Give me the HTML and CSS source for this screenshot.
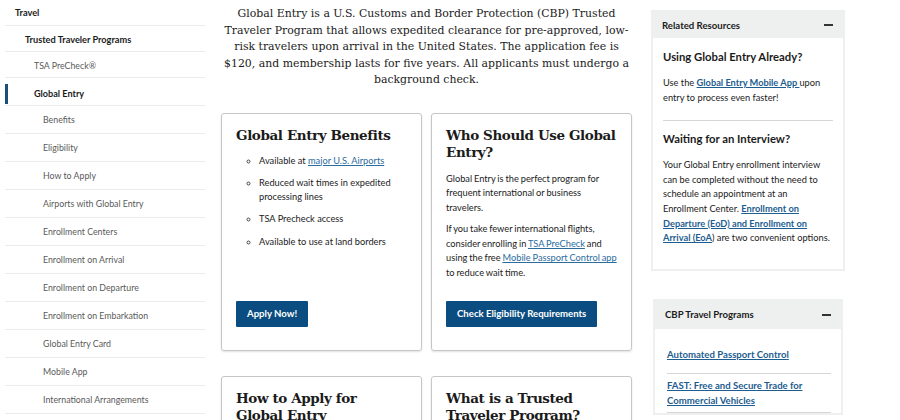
FILE: index.html
```html
<!DOCTYPE html>
<html lang="en">
<head>
<meta charset="utf-8">
<title>Global Entry</title>
<link rel="stylesheet" href="styles.css">
</head>
<body>
<div class="page">
  <nav class="sidenav">
    <ul>
      <li class="lvl0">Travel</li>
      <li class="lvl1">Trusted Traveler Programs</li>
      <li class="lvl2 short">TSA PreCheck®</li>
      <li class="lvl2 active">Global Entry</li>
      <li class="lvl3">Benefits</li>
      <li class="lvl3">Eligibility</li>
      <li class="lvl3">How to Apply</li>
      <li class="lvl3">Airports with Global Entry</li>
      <li class="lvl3">Enrollment Centers</li>
      <li class="lvl3">Enrollment on Arrival</li>
      <li class="lvl3">Enrollment on Departure</li>
      <li class="lvl3">Enrollment on Embarkation</li>
      <li class="lvl3">Global Entry Card</li>
      <li class="lvl3">Mobile App</li>
      <li class="lvl3">International Arrangements</li>
    </ul>
  </nav>

  <main class="main">
    <p class="intro">Global Entry is a U.S. Customs and Border Protection (CBP) Trusted Traveler Program that allows expedited clearance for pre-approved, low-risk travelers upon arrival in the United States. The application fee is $120, and membership lasts for five years. All applicants must undergo a background check.</p>

    <div class="cards">
      <section class="card">
        <h2>Global Entry Benefits</h2>
        <ul class="bullets">
          <li>Available at <a href="#">major U.S. Airports</a></li>
          <li>Reduced wait times in expedited processing lines</li>
          <li>TSA Precheck access</li>
          <li>Available to use at land borders</li>
        </ul>
        <a class="btn" href="#">Apply Now!</a>
      </section>
      <section class="card">
        <h2>Who Should Use Global Entry?</h2>
        <p>Global Entry is the perfect program for frequent international or business travelers.</p>
        <p>If you take fewer international flights, consider enrolling in <a href="#">TSA PreCheck</a> and using the free <a href="#">Mobile Passport Control app</a> to reduce wait time.</p>
        <a class="btn" href="#">Check Eligibility Requirements</a>
      </section>
      <section class="card">
        <h2>How to Apply for Global Entry</h2>
      </section>
      <section class="card">
        <h2>What is a Trusted Traveler Program?</h2>
      </section>
    </div>
  </main>

  <aside class="rail">
    <div class="panel">
      <div class="panel-head"><span>Related Resources</span><span class="minus"></span></div>
      <div class="panel-body">
        <h3>Using Global Entry Already?</h3>
        <p>Use the <a class="strong" href="#">Global Entry Mobile App </a>upon entry to process even faster!</p>
        <hr>
        <h3>Waiting for an Interview?</h3>
        <p>Your Global Entry enrollment interview can be completed without the need to schedule an appointment at an Enrollment Center. <a class="strong" href="#">Enrollment on Departure (EoD) and Enrollment on Arrival (EoA</a>) are two convenient options.</p>
      </div>
    </div>
    <div class="panel panel-narrow">
      <div class="panel-head tall"><span>CBP Travel Programs</span><span class="minus"></span></div>
      <ul class="links">
        <li><a class="strong" href="#">Automated Passport Control</a></li>
        <li><a class="strong" href="#">FAST: Free and Secure Trade for Commercial Vehicles</a></li>
      </ul>
    </div>
  </aside>
</div>
</body>
</html>
```

FILE: styles.css
```css
* { box-sizing: border-box; }
html, body { margin: 0; padding: 0; background: #fff; }
body {
  font-family: "Source Sans Pro", Lato, "Noto Sans", sans-serif;
  color: #1b1b1b;
  overflow: hidden;
  height: 420px;
}
.page {
  display: flex;
  align-items: flex-start;
}

/* left nav */
.sidenav { width: 205px; flex: none; }
.sidenav ul { list-style: none; margin: 0; padding: 0; }
.sidenav li {
  position: relative;
  margin-left: 5px;
  height: 28px;
  line-height: 27px;
  border-bottom: 1px solid #ebebeb;
  font-size: 8.8px;
  color: #5a5a5a;
  white-space: nowrap;
}
.sidenav li.lvl0 { height: 26px; line-height: 25px; padding-left: 10px; font-weight: 700; font-size: 9.2px; color: #1b1b1b; }
.sidenav li.lvl1 { height: 26px; line-height: 27px; padding-left: 20px; font-weight: 700; font-size: 9.2px; color: #1b1b1b; }
.sidenav li.short { height: 26px; line-height: 27px; }
.sidenav li.lvl2 { padding-left: 29px; }
.sidenav li.lvl3 { padding-left: 38px; }
.sidenav li.active { font-weight: 700; font-size: 9.1px; color: #1b1b1b; line-height: 31px; }
.sidenav li.active::before {
  content: "";
  position: absolute;
  left: 0;
  top: 6px;
  width: 3px;
  height: 20px;
  background: #1a4f7a;
}

/* main */
.main { width: 411px; margin-left: 16px; flex: none; }
.intro {
  margin: 6px 0 24px;
  font-family: "DejaVu Serif", "Liberation Serif", serif;
  font-size: 10.9px;
  line-height: 16.5px;
  text-align: center;
  color: #1b1b1b;
}
.cards {
  display: grid;
  grid-template-columns: 1fr 1fr;
  column-gap: 9px;
  row-gap: 25px;
}
.card {
  display: flex;
  flex-direction: column;
  height: 238px;
  padding: 13px 14px 23px;
  border: 1px solid #c6c6c6;
  border-radius: 3px;
  box-shadow: 0 1px 2px rgba(0,0,0,0.12);
}
.card h2 {
  margin: 0;
  font-family: "DejaVu Serif", "Liberation Serif", serif;
  font-weight: 700;
  font-size: 13.5px;
  letter-spacing: -0.4px;
  line-height: 17px;
  color: #1b1b1b;
}
.card p {
  margin: 11px 0 0;
  font-size: 9.25px;
  line-height: 14.8px;
  word-spacing: -0.5px;
  color: #1b1b1b;
}
.card p + p { margin-top: 6px; }
.card a { color: #2b6c9e; }
.bullets {
  margin: 10px 0 0;
  padding-left: 23px;
  list-style: circle;
  font-size: 9.25px;
  line-height: 14.3px;
}
.bullets li { margin-bottom: 8px; }
.bullets li::marker { font-size: 8px; color: #444; }
.btn {
  margin-top: auto;
  align-self: flex-start;
  display: inline-block;
  height: 26px;
  line-height: 26px;
  padding: 0 11px;
  background: #0b4d80;
  color: #fff !important;
  text-decoration: none;
  font-size: 9.6px;
  font-weight: 700;
  border-radius: 1px;
}

/* right rail */
.rail { width: 194px; margin-left: 19px; margin-top: 10px; flex: none; }
.panel {
  border: 2px solid #eef0f0;
  margin-bottom: 28px;
}
.panel-narrow { margin: 0 2px; }
.panel-head {
  display: flex;
  justify-content: space-between;
  align-items: center;
  height: 26px;
  padding: 0 10px 0 9px;
  background: #eef0f0;
  font-size: 9.6px;
  font-weight: 700;
  color: #1b1b1b;
}
.panel-head.tall { height: 28px; padding-left: 10px; }
.minus {
  display: block;
  width: 9px;
  height: 2px;
  background: #333;
}
.panel-body { padding: 11px 10px 23px; }
.panel-body h3 {
  margin: 0;
  font-size: 11.3px;
  line-height: 16px;
  font-weight: 700;
  color: #1b1b1b;
}
.panel-body p {
  margin: 11px 0 0;
  font-size: 9.25px;
  line-height: 14.6px;
  color: #1b1b1b;
}
.panel-body hr {
  border: 0;
  border-top: 1px solid #d6d6d6;
  margin: 15px 0 10px;
}
a.strong { color: #1d5d8f; font-weight: 700; }
.links { list-style: none; margin: 0; padding: 14px 10px 0 12px; }
.links li {
  border-bottom: 1px solid #d6d6d6;
  font-size: 9.6px;
  line-height: 15px;
  padding: 4px 0 11px;
}
.links li + li { padding: 4px 0 4px; }
```
